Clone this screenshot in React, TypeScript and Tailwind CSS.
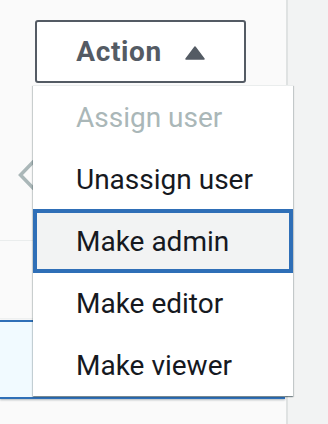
import React from "react";

type Item = { label: string; disabled?: boolean; active?: boolean };

const items: Item[] = [
  { label: "Assign user", disabled: true },
  { label: "Unassign user" },
  { label: "Make admin", active: true },
  { label: "Make editor" },
  { label: "Make viewer" },
];

export default function App() {
  return (
    <div
      className="flex h-[424px] w-[328px] overflow-hidden bg-[#f2f3f3]"
      style={{ fontFamily: "Roboto, 'Liberation Sans', Arial, sans-serif" }}
    >
      <div className="relative flex h-full w-[288px] shrink-0 flex-col border-r-2 border-[#dfe2e2] bg-[#fafafa]">
        {/* action button */}
        <div className="pl-[35px] pt-[20px]">
          <button className="flex h-[63px] w-[211px] items-center justify-center gap-[23px] rounded-[3px] border-2 border-[#545b64] bg-white text-[28px] font-bold leading-none tracking-[0.6px] text-[#545b64]">
            <span>Action</span>
            <svg width="20" height="14" viewBox="0 0 20 14" className="mt-[2px]">
              <path d="M10 1 L19 13 L1 13 Z" fill="#545b64" stroke="#545b64" strokeWidth="1.5" strokeLinejoin="round" />
            </svg>
          </button>
        </div>

        {/* content behind the menu */}
        <div className="mt-[77px] h-[30px] pl-[18px]">
          <svg width="18" height="30" viewBox="0 0 18 30">
            <polyline points="16,1 2.5,15 16,29" fill="none" stroke="#aab7b8" strokeWidth="3.5" />
          </svg>
        </div>
        <div className="mt-[50px] h-px bg-[#eaeded]" />
        <div className="mt-[77px] h-px bg-[#eef0f0]" />
        <div className="mr-px mt-px h-[79px] border-y-2 border-[#2f6fb7] bg-[#f1faff] shadow-[0_1px_2px_rgba(0,28,36,0.3)]" />

        {/* dropdown menu */}
        <div className="absolute left-[33px] top-[85px] w-[260px] border-t border-[#eaeded] bg-white shadow-[0_1px_1px_0_rgba(0,28,36,0.3),1px_1px_1px_0_rgba(0,28,36,0.15),-1px_1px_1px_0_rgba(0,28,36,0.15)]">
          {items.map((it) => (
            <div
              key={it.label}
              className={
                it.active
                  ? "relative z-10 -my-px flex h-[64px] items-center border-4 border-[#2f6fb7] bg-[#f2f3f3] pl-[39px] pt-px text-[28px] text-[#16191f]"
                  : it.disabled
                    ? "flex h-[62px] items-center pl-[43px] pt-[2px] text-[28px] text-[#aab7b8]"
                    : "flex h-[62px] items-center pl-[43px] pt-[2px] text-[28px] text-[#16191f]"
              }
            >
              {it.label}
            </div>
          ))}
        </div>
      </div>
      <div className="flex-1" />
    </div>
  );
}
